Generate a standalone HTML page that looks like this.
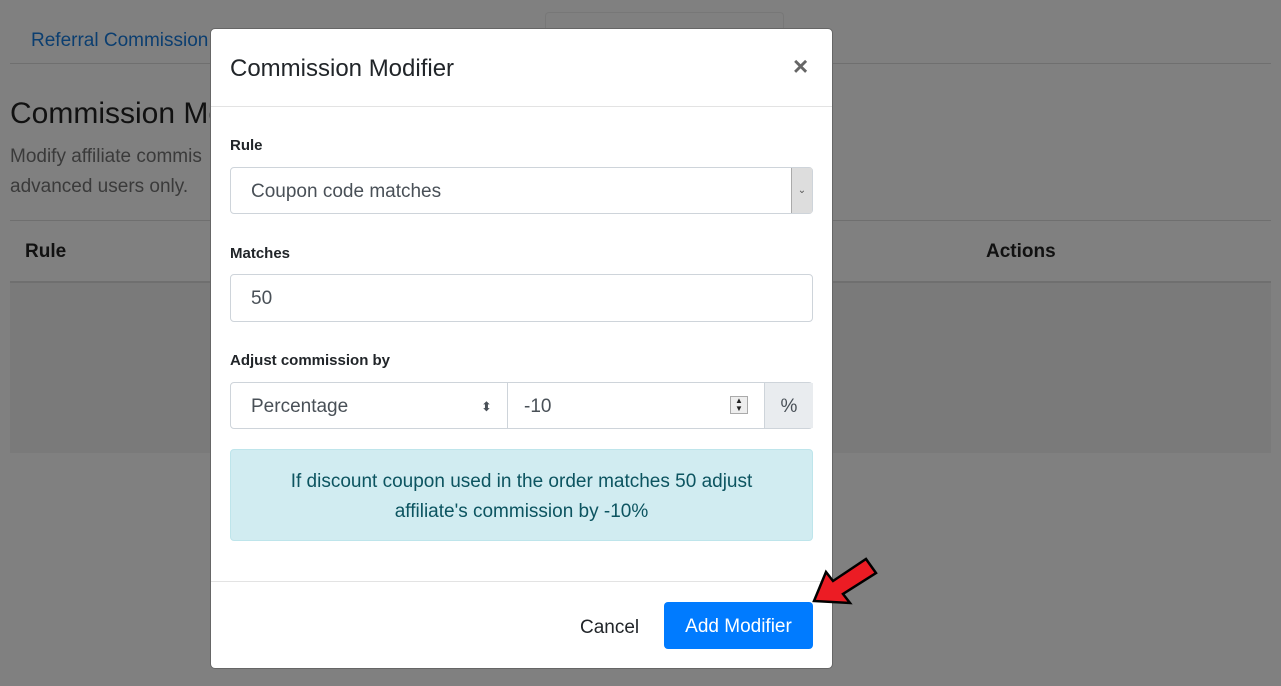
<!DOCTYPE html>
<html><head><style>
*{box-sizing:border-box;margin:0;padding:0}
body{width:1281px;height:686px;overflow:hidden;background:#808080;font-family:"Liberation Sans",sans-serif;position:relative;color:#212529}
.a{position:absolute}
.modal{left:210px;top:28px;width:623px;height:641px;background:#fff;border-radius:5px;border:1px solid #666}
label{position:absolute;left:19px;font-weight:bold;font-size:15px;color:#212529}
.in{position:absolute;left:19px;width:583px;border:1px solid #ced4da;border-radius:4px;font-size:19px;color:#495057;padding-left:20px}
</style></head><body>
<div class="a" style="left:31px;top:30px;font-size:19px;color:#0b3e70">Referral Commission</div>
<div class="a" style="left:545px;top:12px;width:239px;height:20px;border:1px solid #777;border-bottom:none;border-radius:4px 4px 0 0"></div>
<div class="a" style="left:10px;top:63px;width:1261px;height:1px;background:#6f6f6f"></div>
<div class="a" style="left:10px;top:97px;font-size:30px;color:#111">Commission Mo</div>
<div class="a" style="left:10px;top:142px;font-size:19px;line-height:30px;color:#3a3a3a">Modify affiliate commis<br>advanced users only.</div>
<div class="a" style="left:10px;top:220px;width:1261px;height:1px;background:#6f6f6f"></div>
<div class="a" style="left:25px;top:241px;font-size:19px;font-weight:bold;color:#111">Rule</div>
<div class="a" style="left:986px;top:241px;font-size:19px;font-weight:bold;color:#111">Actions</div>
<div class="a" style="left:10px;top:281px;width:1261px;height:172px;background:#7a7a7a;border-top:2px solid #6f6f6f"></div>
<div class="a modal">
 <div class="a" style="left:19px;top:26px;font-size:24px;color:#212529">Commission Modifier</div>
 <div class="a" style="left:582px;top:22px;font-size:26px;font-weight:bold;color:#666">×</div>
 <div class="a" style="left:0;top:77px;width:621px;height:1px;background:#e3e3e3"></div>
 <label style="top:108px">Rule</label>
 <div class="in" style="top:138px;height:47px;line-height:47px">Coupon code matches
  <div class="a" style="right:0;top:0;width:21px;height:45px;background:#ddd;border-left:1px solid #aaa;font-size:10px;text-align:center;line-height:45px;color:#555">⌄</div></div>
 <label style="top:216px">Matches</label>
 <div class="in" style="top:245px;height:48px;line-height:48px">50</div>
 <label style="top:323px">Adjust commission by</label>
 <div class="in" style="top:353px;height:47px;line-height:47px;padding:0">
  <div class="a" style="left:20px;top:0">Percentage</div>
  <div class="a" style="left:250px;top:0;font-size:13px">⬍</div>
  <div class="a" style="left:276px;top:0;width:1px;height:45px;background:#ced4da"></div>
  <div class="a" style="left:293px;top:0">-10</div>
  <div class="a" style="left:499px;top:13px;width:18px;height:18px;border:1px solid #aaa;background:#eee;font-size:8px;line-height:8px;text-align:center;color:#222">▲<br>▼</div>
  <div class="a" style="left:533px;top:0;width:49px;height:45px;background:#e9ecef;border-left:1px solid #ced4da;text-align:center">%</div>
 </div>
 <div class="a" style="left:19px;top:420px;width:583px;height:92px;background:#d1ecf1;border:1px solid #bee5eb;border-radius:4px;color:#0c5460;font-size:19px;line-height:30px;text-align:center;padding-top:17px">If discount coupon used in the order matches 50 adjust<br>affiliate's commission by -10%</div>
 <div class="a" style="left:0;top:552px;width:621px;height:1px;background:#e3e3e3"></div>
 <div class="a" style="left:369px;top:588px;font-size:19px">Cancel</div>
 <div class="a" style="left:453px;top:573px;width:149px;height:47px;background:#007bff;border-radius:4px;color:#fff;font-size:19px;line-height:49px;text-align:center">Add Modifier</div>
</div>
<svg class="a" style="left:800px;top:550px" width="90" height="60"><polygon points="14,51 26,22 33,31 66,9 76,23 43,44 50,53" fill="#ec1c24" stroke="#000" stroke-width="2.5" stroke-linejoin="miter"/></svg>
</body></html>
